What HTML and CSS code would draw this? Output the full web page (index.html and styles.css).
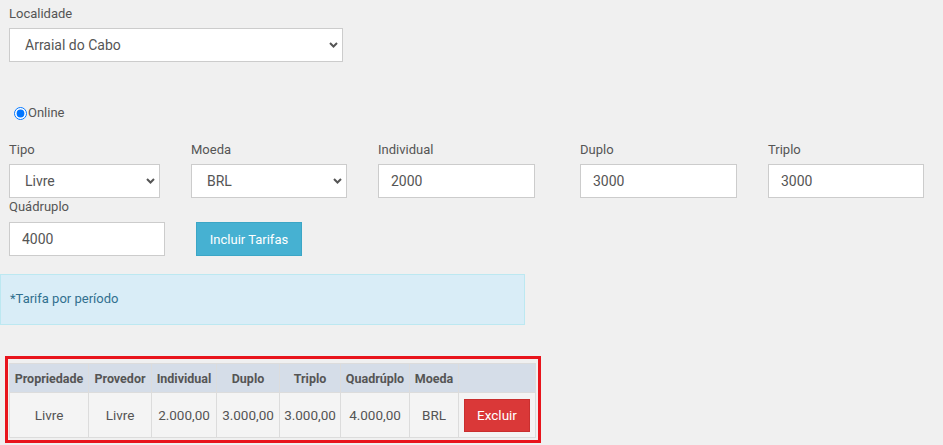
FILE: index.html
```html
<!DOCTYPE html>
<html lang="pt">
<head>
<meta charset="utf-8">
<title>Tarifas</title>
<link rel="stylesheet" href="styles.css">
</head>
<body>
<div class="page">
  <div class="field loc">
    <label class="lbl">Localidade</label>
    <div class="select-wrap">
      <select class="control sel"><option>Arraial do Cabo</option></select>
      <svg class="chev" width="9" height="6" viewBox="0 0 9 6"><path d="M1 1 L4.5 4.5 L8 1" fill="none" stroke="#555" stroke-width="2"/></svg>
    </div>
  </div>

  <div class="radio-row">
    <input type="radio" id="online" name="tipo" checked>
    <label for="online" class="radio-lbl">Online</label>
  </div>

  <div class="fields">
    <div class="field w151">
      <label class="lbl">Tipo</label>
      <div class="select-wrap">
        <select class="control sel"><option>Livre</option></select>
        <svg class="chev" width="9" height="6" viewBox="0 0 9 6"><path d="M1 1 L4.5 4.5 L8 1" fill="none" stroke="#555" stroke-width="2"/></svg>
      </div>
    </div>
    <div class="field w156">
      <label class="lbl">Moeda</label>
      <div class="select-wrap">
        <select class="control sel"><option>BRL</option></select>
        <svg class="chev" width="9" height="6" viewBox="0 0 9 6"><path d="M1 1 L4.5 4.5 L8 1" fill="none" stroke="#555" stroke-width="2"/></svg>
      </div>
    </div>
    <div class="field w157">
      <label class="lbl">Individual</label>
      <input class="control inp" type="text" value="2000">
    </div>
    <div class="field w157 extra">
      <label class="lbl">Duplo</label>
      <input class="control inp" type="text" value="3000">
    </div>
    <div class="field w156">
      <label class="lbl">Triplo</label>
      <input class="control inp" type="text" value="3000">
    </div>
  </div>

  <div class="fields row2">
    <div class="field w156">
      <label class="lbl lbl-tight">Quádruplo</label>
      <input class="control inp" type="text" value="4000">
    </div>
    <button class="btn-info" type="button">Incluir Tarifas</button>
  </div>

  <div class="alert">*Tarifa por período</div>

  <div class="highlight">
    <table class="grid">
      <colgroup>
        <col style="width:79px"><col style="width:63px"><col style="width:65px"><col style="width:63px">
        <col style="width:61px"><col style="width:69px"><col style="width:49px"><col style="width:77px">
      </colgroup>
      <thead>
        <tr>
          <th>Propriedade</th><th>Provedor</th><th>Individual</th><th>Duplo</th>
          <th>Triplo</th><th>Quadrúplo</th><th>Moeda</th><th></th>
        </tr>
      </thead>
      <tbody>
        <tr>
          <td>Livre</td><td>Livre</td><td>2.000,00</td><td>3.000,00</td>
          <td>3.000,00</td><td>4.000,00</td><td>BRL</td>
          <td><button class="btn-danger" type="button">Excluir</button></td>
        </tr>
      </tbody>
    </table>
  </div>
</div>
</body>
</html>
```
FILE: styles.css
```css
* { box-sizing: border-box; }
html, body {
  margin: 0;
  padding: 0;
  background: #f0f0f0;
  font-family: Roboto, "Liberation Sans", Arial, sans-serif;
  color: #555;
}
.page {
  padding: 5px 0 0 9px;
  width: 943px;
  height: 445px;
  overflow: hidden;
}
.field {
  display: flex;
  flex-direction: column;
}
.lbl {
  font-size: 13px;
  line-height: 18px;
  margin-bottom: 5px;
  color: #555;
}
.lbl-tight { margin-bottom: 6px; }
.loc { width: 334px; }
.select-wrap { position: relative; }
.control {
  display: block;
  width: 100%;
  height: 34px;
  border: 1px solid #ccc;
  background: #fff;
  font-family: inherit;
  font-size: 14px;
  color: #555;
  margin: 0;
  border-radius: 0;
  outline: none;
}
.sel {
  -webkit-appearance: none;
  appearance: none;
  padding: 0 20px 0 15px;
}
.inp { padding: 0 12px; }
.chev {
  position: absolute;
  right: 5px;
  top: 14px;
  pointer-events: none;
}
.radio-row {
  display: flex;
  align-items: center;
  margin-top: 42px;
  height: 18px;
}
.radio-row input {
  width: 13px;
  height: 13px;
  margin: 0 1px 0 5px;
}
.radio-lbl {
  font-size: 13px;
  line-height: 18px;
  color: #555;
}
.fields {
  display: flex;
  gap: 31px;
  margin-top: 19px;
}
.row2 {
  margin-top: 0;
  align-items: flex-end;
}
.w151 { width: 151px; }
.w156 { width: 156px; }
.w157 { width: 157px; }
.extra { margin-left: 14px; }
.btn-info {
  width: 106px;
  height: 34px;
  background: #46b1d2;
  border: 1px solid #3ba6c6;
  color: #fff;
  font-family: inherit;
  font-size: 13px;
  padding: 0;
  margin: 0;
}
.alert {
  margin: 18px 0 0 -9px;
  width: 525px;
  height: 51px;
  background: #d9edf7;
  border: 1px solid #bce8f1;
  color: #31708f;
  font-size: 13px;
  line-height: 18px;
  padding: 15px 9px;
}
.highlight {
  margin: 31px 0 0 -4px;
  width: 536px;
  height: 87px;
  border: 3px solid #e8141c;
  padding: 4px 3px 3px 1px;
}
.grid {
  border-collapse: collapse;
  table-layout: fixed;
  width: 526px;
}
.grid th, .grid td {
  border: 1px solid #dcdcdc;
  text-align: center;
  padding: 0;
  white-space: nowrap;
  overflow: hidden;
}
.grid th {
  background: #d5dde8;
  height: 29px;
  font-size: 12.5px;
  font-weight: bold;
  color: #555;
}
.grid td {
  background: #f4f4f4;
  height: 45px;
  font-size: 13.5px;
  color: #555;
}
.btn-danger {
  width: 66px;
  height: 33px;
  background: #da3838;
  border: 1px solid #c92f2f;
  color: #fff;
  font-family: inherit;
  font-size: 13.5px;
  padding: 0;
  margin: 0;
}
```
